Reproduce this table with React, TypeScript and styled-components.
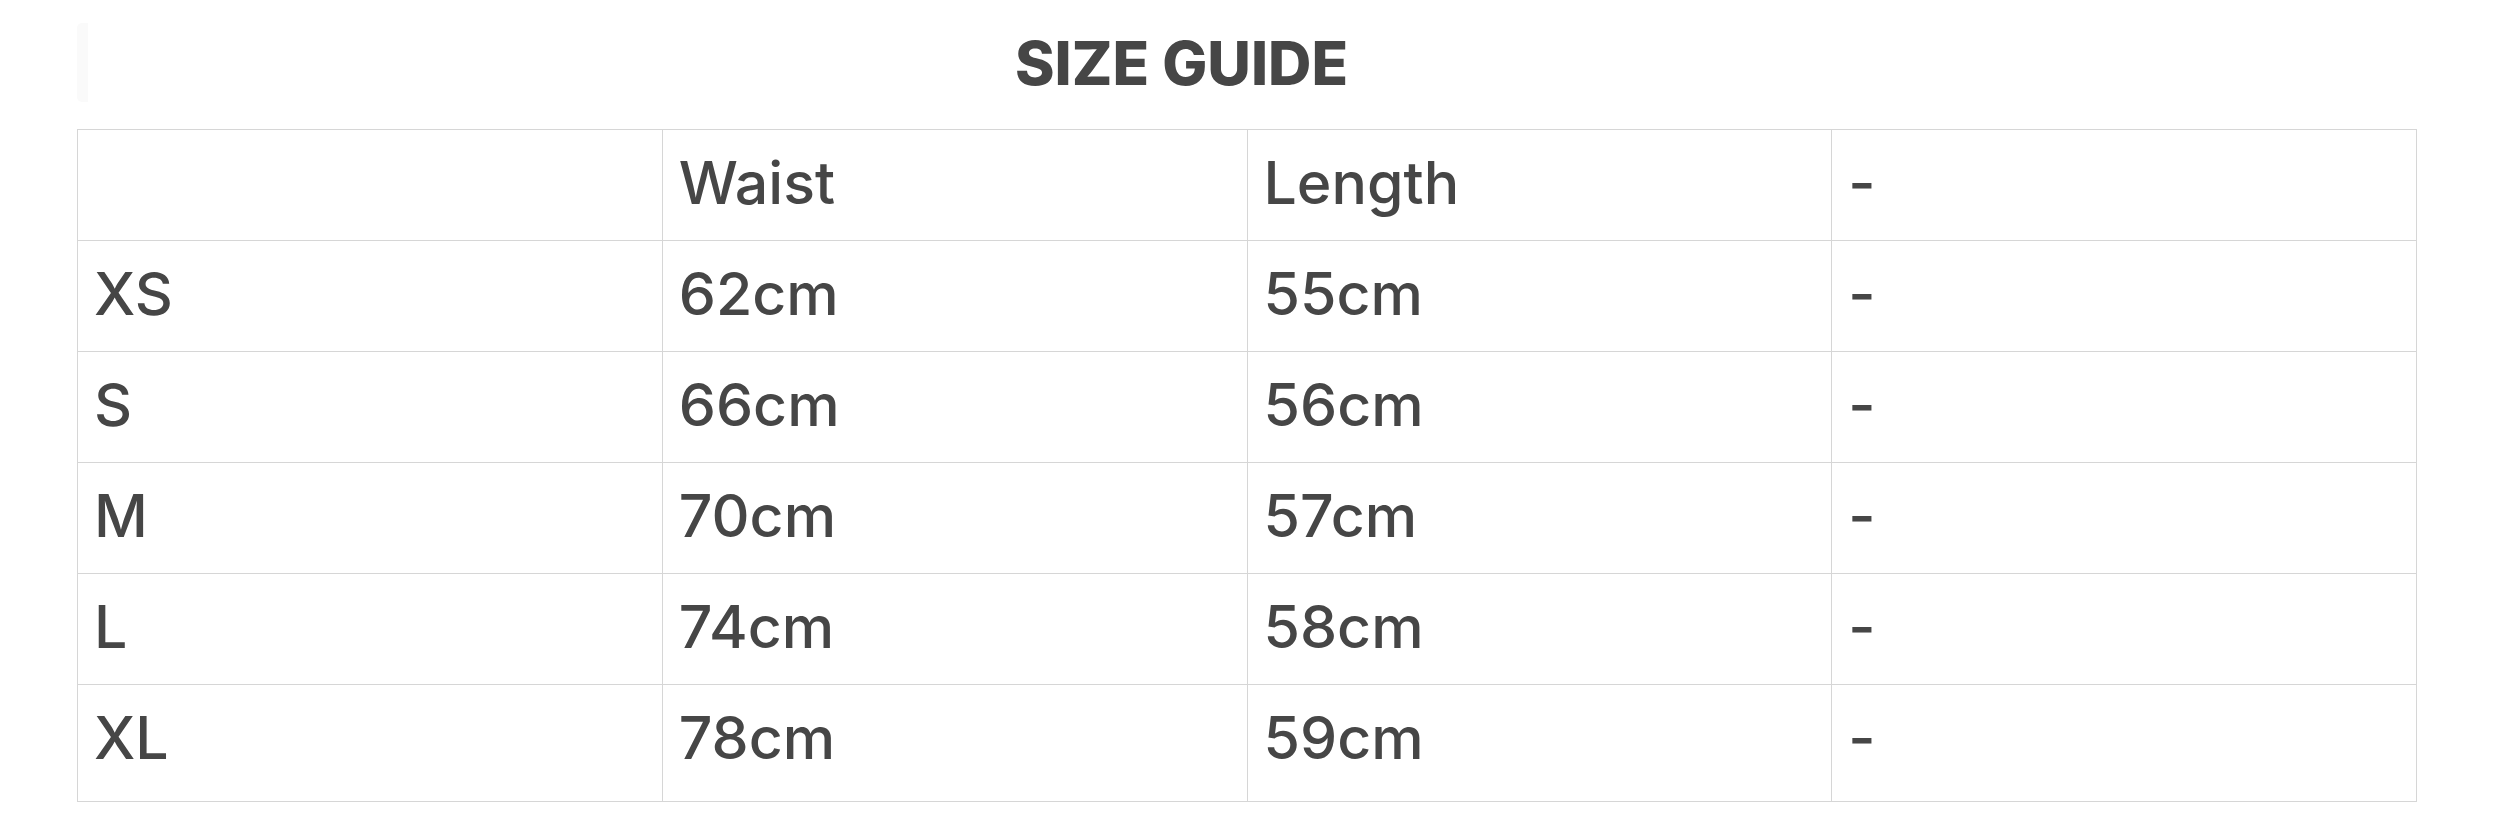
import React, { FC } from 'react';
import styled, { createGlobalStyle } from 'styled-components';

const GlobalStyle = createGlobalStyle`
  html, body {
    margin: 0;
    padding: 0;
    background: #ffffff;
  }
  body {
    font-family: Inter, 'Liberation Sans', sans-serif;
    color: #464646;
  }
`;

const Page = styled.div`
  padding: 23px 79px 0 77px;
`;

const Header = styled.div`
  height: 79px;
  display: flex;
  align-items: center;
  justify-content: center;
  padding-right: 142px;
  border-left: 11px solid #fafafa;
  border-radius: 5px;
  margin-bottom: 27px;
  box-sizing: border-box;
`;

const Title = styled.h1`
  margin: 0;
  font-size: 60px;
  font-weight: 800;
  letter-spacing: 0;
  color: #464646;
  line-height: 1;
`;

const Table = styled.table`
  width: 100%;
  border-collapse: collapse;
  table-layout: fixed;
`;

const Row = styled.tr<{ $tall?: boolean }>`
  height: ${({ $tall }) => ($tall ? '117px' : '111px')};
`;

const Cell = styled.td`
  border: 1px solid #d6d6d6;
  padding: 17px 16px 0;
  vertical-align: top;
  font-size: 59px;
  line-height: 71px;
  font-weight: 500;
  color: #464646;
  white-space: nowrap;
`;

const HeadCell = styled(Cell).attrs({ as: 'th' })`
  text-align: left;
`;

const sizes = [
  { size: 'XS', waist: '62cm', length: '55cm' },
  { size: 'S', waist: '66cm', length: '56cm' },
  { size: 'M', waist: '70cm', length: '57cm' },
  { size: 'L', waist: '74cm', length: '58cm' },
  { size: 'XL', waist: '78cm', length: '59cm' },
];

const App: FC = () => {
  return (
    <>
      <GlobalStyle />
      <Page>
        <Header>
          <Title>SIZE GUIDE</Title>
        </Header>
        <Table>
          <thead>
            <Row>
              <HeadCell />
              <HeadCell>Waist</HeadCell>
              <HeadCell>Length</HeadCell>
              <HeadCell>-</HeadCell>
            </Row>
          </thead>
          <tbody>
            {sizes.map((s, i) => (
              <Row key={s.size} $tall={i === sizes.length - 1}>
                <Cell>{s.size}</Cell>
                <Cell>{s.waist}</Cell>
                <Cell>{s.length}</Cell>
                <Cell>-</Cell>
              </Row>
            ))}
          </tbody>
        </Table>
      </Page>
    </>
  );
};

export default App;
